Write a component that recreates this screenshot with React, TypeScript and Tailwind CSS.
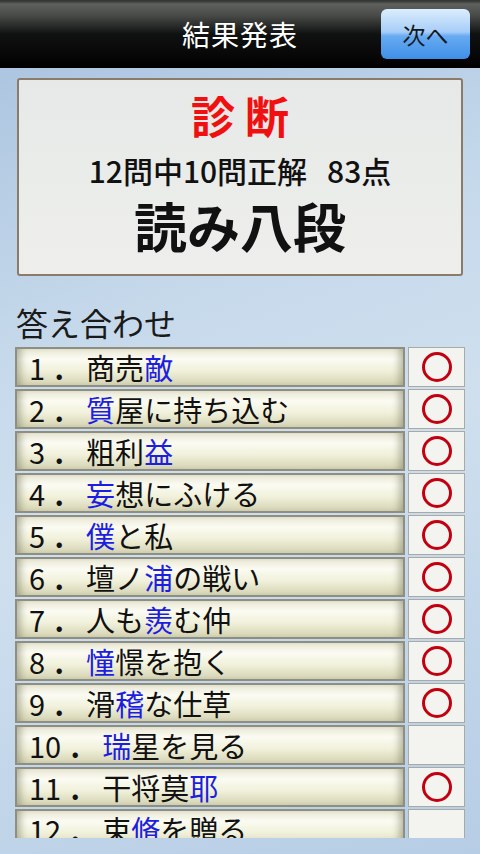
import React from 'react'

type Item = {
  pre: string
  key: string
  post: string
  ok: boolean
}

const items: Item[] = [
  { pre: '商売', key: '敵', post: '', ok: true },
  { pre: '', key: '質', post: '屋に持ち込む', ok: true },
  { pre: '粗利', key: '益', post: '', ok: true },
  { pre: '', key: '妄', post: '想にふける', ok: true },
  { pre: '', key: '僕', post: 'と私', ok: true },
  { pre: '壇ノ', key: '浦', post: 'の戦い', ok: true },
  { pre: '人も', key: '羨', post: 'む仲', ok: true },
  { pre: '', key: '憧', post: '憬を抱く', ok: true },
  { pre: '滑', key: '稽', post: 'な仕草', ok: true },
  { pre: '', key: '瑞', post: '星を見る', ok: false },
  { pre: '干将莫', key: '耶', post: '', ok: true },
  { pre: '束', key: '脩', post: 'を贈る', ok: false },
]

function Row({ n, item }: { n: number; item: Item }) {
  return (
    <div className="flex h-[40px] shrink-0 gap-[3px]">
      <div className="flex w-[390px] items-center border-2 border-[#8e8e82] bg-[linear-gradient(to_bottom,#e9e8d4_0%,#fbfbf3_28%,#f0f0da_62%,#d4d3b3_100%)] pl-[12px] text-[29px] leading-none text-[#111] shadow-[inset_9px_0_7px_-5px_rgba(110,110,80,0.45),inset_-9px_0_7px_-5px_rgba(110,110,80,0.45)]">
        <span>{n}</span>
        <span className="inline-block w-[28px] text-center font-bold">.</span>
        <span className="ml-[13px]">
          {item.pre}
          <span className="text-[#1c1ee0]">{item.key}</span>
          {item.post}
        </span>
      </div>
      <div className="flex w-[57px] items-center justify-center border border-[#a9a9a6] bg-[#f3f3f0]">
        {item.ok && <div className="h-[30px] w-[30px] rounded-full border-[3.5px] border-[#c20010]" />}
      </div>
    </div>
  )
}

export default function App() {
  return (
    <div className="flex h-[854px] w-[480px] flex-col overflow-hidden bg-[linear-gradient(160deg,#a7c1de_0%,#c6d9eb_35%,#cfdfee_55%,#b6cde5_100%)] font-['Noto_Sans_CJK_JP',sans-serif]">
      {/* ヘッダー */}
      <div className="grid h-[68px] shrink-0 grid-cols-[1fr_auto_1fr] items-center bg-[linear-gradient(to_bottom,#353735_0px,#353735_1px,#5f615f_4px,#474947_16px,#101211_34px,#000_68px)]">
        <div />
        <h1 className="text-[28px] leading-none tracking-[1px] text-white">結果発表</h1>
        <div className="flex justify-end pr-[10px]">
          <button className="flex h-[50px] w-[89px] items-center justify-center rounded-[6px] bg-[linear-gradient(to_bottom,#dcedfd_0%,#a6cdf7_46%,#67abf2_54%,#3f8fe8_100%)] text-[23px] leading-none text-[#141820]">
            次へ
          </button>
        </div>
      </div>

      {/* 診断カード */}
      <div className="mx-[17px] mt-[10px] flex h-[198px] shrink-0 flex-col items-center rounded-[3px] border-2 border-[#8b7c6a] bg-[linear-gradient(to_bottom,#e6e9e7,#eeefed)] pt-[10px]">
        <div className="pl-[10px] text-[44px] font-bold leading-[50px] tracking-[10px] text-[#f01010]">診断</div>
        <div className="mt-[12px] text-[30px] font-medium leading-[36px] text-[#111]">
          12問中10問正解<span className="ml-[20px]">83点</span>
        </div>
        <div className="mt-[6px] text-[53px] font-bold leading-[62px] text-[#111]">読み八段</div>
      </div>

      <div className="ml-[16px] mt-[25px] text-[32px] leading-[42px] text-[#1a1a1a]">答え合わせ</div>

      {/* 答え一覧 */}
      <div className="ml-[15px] mt-[4px] flex h-[491px] flex-col gap-[2px] overflow-hidden">
        {items.map((item, i) => (
          <Row key={i} n={i + 1} item={item} />
        ))}
      </div>
    </div>
  )
}
